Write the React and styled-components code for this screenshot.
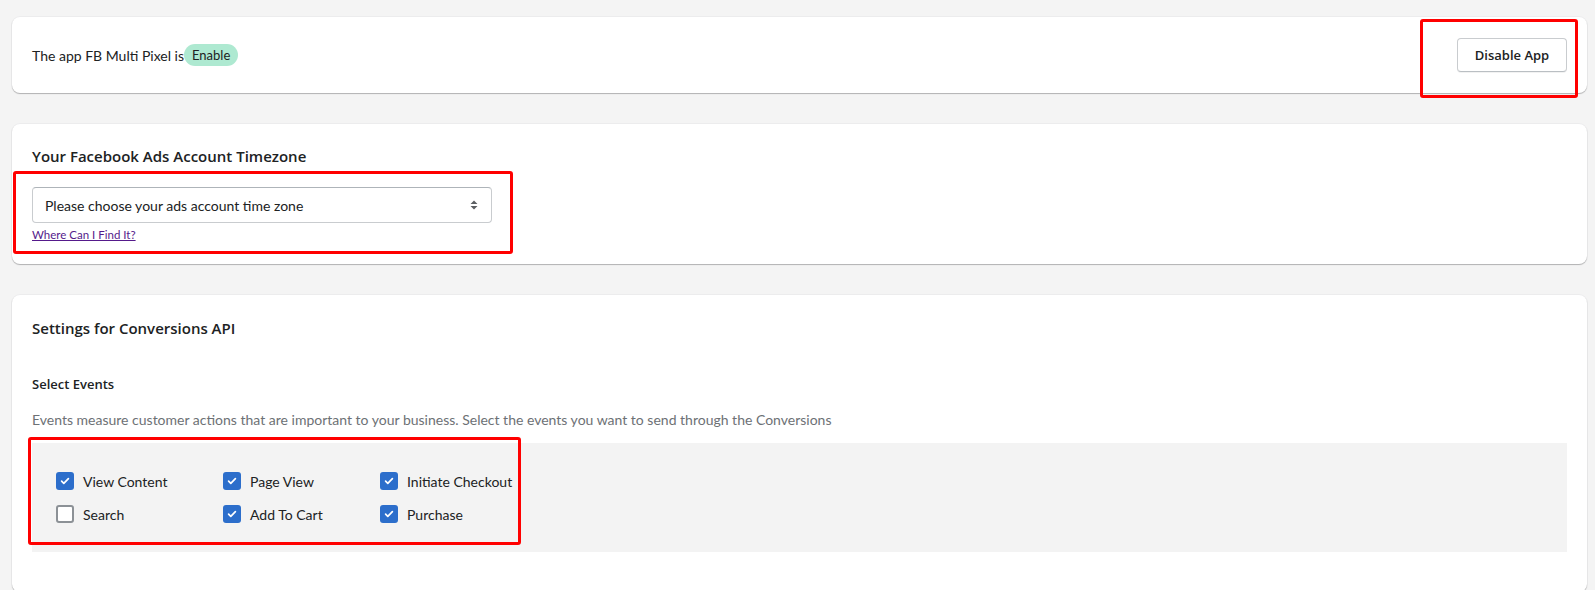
import React from "react";
import styled, { createGlobalStyle } from "styled-components";

const GlobalStyle = createGlobalStyle`
  body {
    margin: 0;
    background: #f4f4f4;
    font-family: "Lato", "Noto Sans", sans-serif;
    color: #202223;
  }
`;

const Page = styled.div`
  padding: 17px 8px 0 12px;
  display: flex;
  flex-direction: column;
  gap: 31px;
  height: 590px;
  overflow: hidden;
  box-sizing: border-box;
`;

const Card = styled.div`
  position: relative;
  background: #fff;
  border-radius: 8px;
  box-shadow: 0 1px 1px rgba(0, 0, 0, 0.25), 0 0 0 1px rgba(63, 63, 68, 0.04);
  padding: ${(p) => p.$pad || "22px 20px"};
  flex-shrink: 0;
`;

const StatusRow = styled.div`
  height: 76px;
  display: flex;
  align-items: center;
  justify-content: space-between;
  box-sizing: border-box;
`;

const StatusText = styled.div`
  display: flex;
  align-items: center;
  font-size: 14px;
`;

const Badge = styled.span`
  display: inline-flex;
  align-items: center;
  height: 22px;
  padding: 0 8px;
  border-radius: 11px;
  background: #aee9d1;
  font-size: 13px;
  color: #202223;
`;

const Button = styled.button`
  height: 34px;
  width: 110px;
  border: 1px solid #c9cccf;
  border-bottom-color: #babfc3;
  border-radius: 4px;
  background: #fff;
  font-family: "Open Sans", sans-serif;
  font-size: 13px;
  font-weight: 600;
  color: #202223;
  box-shadow: 0 1px 0 rgba(0, 0, 0, 0.05);
`;

const Marker = styled.div`
  position: absolute;
  border: 3px solid #ff0000;
  border-radius: 3px;
  pointer-events: none;
  box-sizing: border-box;
  top: ${(p) => p.$top}px;
  left: ${(p) => (p.$left != null ? `${p.$left}px` : "auto")};
  right: ${(p) => (p.$right != null ? `${p.$right}px` : "auto")};
  width: ${(p) => p.$w}px;
  height: ${(p) => p.$h}px;
`;

const Title = styled.h2`
  margin: 0;
  font-family: "Open Sans", sans-serif;
  font-size: 15px;
  line-height: 20px;
  font-weight: 600;
`;

const SubTitle = styled.h3`
  margin: ${(p) => p.$mt || 0}px 0 0;
  font-family: "Open Sans", sans-serif;
  font-size: 13px;
  line-height: 20px;
  font-weight: 600;
`;

const SelectBox = styled.div`
  margin-top: 21px;
  width: 460px;
  height: 36px;
  box-sizing: border-box;
  border: 1px solid #c9cccf;
  border-top-color: #aeb4b9;
  border-radius: 4px;
  display: flex;
  align-items: center;
  justify-content: space-between;
  padding: 0 12px 0 12px;
  font-size: 14px;
`;

const HelpLink = styled.a`
  display: inline-block;
  margin-top: 4px;
  font-size: 11.5px;
  line-height: 14px;
  color: #551a8b;
  text-decoration: underline;
`;

const Description = styled.p`
  margin: 16px 0 0;
  font-size: 14px;
  line-height: 20px;
  color: #6d7175;
`;

const EventsPanel = styled.div`
  margin-top: 13px;
  height: 109px;
  box-sizing: border-box;
  background: #f3f3f3;
  padding: 29px 0 0 24px;
  display: grid;
  grid-template-columns: 167px 157px auto;
  grid-auto-rows: 18px;
  row-gap: 15px;
`;

const CheckItem = styled.label`
  display: flex;
  align-items: center;
  gap: 9px;
  font-size: 14px;
  color: #202223;
  white-space: nowrap;
`;

const Box = styled.span`
  width: 18px;
  height: 18px;
  box-sizing: border-box;
  border-radius: 3px;
  display: inline-flex;
  align-items: center;
  justify-content: center;
  background: ${(p) => (p.$checked ? "#2c6ecb" : "#fff")};
  border: ${(p) => (p.$checked ? "none" : "2px solid #8c9196")};
`;

const Check = ({ checked, label }) => (
  <CheckItem>
    <Box $checked={checked}>
      {checked && (
        <svg width="12" height="12" viewBox="0 0 12 12">
          <path d="M2.6 6.2l2.2 2.2 4.6-4.8" fill="none" stroke="#fff" strokeWidth="1.7" strokeLinecap="round" strokeLinejoin="round" />
        </svg>
      )}
    </Box>
    {label}
  </CheckItem>
);

const events = [
  { label: "View Content", checked: true },
  { label: "Page View", checked: true },
  { label: "Initiate Checkout", checked: true },
  { label: "Search", checked: false },
  { label: "Add To Cart", checked: true },
  { label: "Purchase", checked: true },
];

export default function App() {
  return (
    <>
      <GlobalStyle />
      <Page>
        <Card $pad="0 20px">
          <StatusRow>
            <StatusText>
              The app FB Multi Pixel is
              <Badge>Enable</Badge>
            </StatusText>
            <Button>Disable App</Button>
          </StatusRow>
          <Marker $top={2} $right={9} $w={158} $h={79} />
        </Card>

        <Card>
          <Title>Your Facebook Ads Account Timezone</Title>
          <SelectBox>
            Please choose your ads account time zone
            <svg width="10" height="14" viewBox="0 0 10 14">
              <path d="M5 2.5L8.5 6H1.5z M5 11.5L1.5 8H8.5z" fill="#5c5f62" />
            </svg>
          </SelectBox>
          <HelpLink href="#">Where Can I Find It?</HelpLink>
          <Marker $top={47} $left={1} $w={500} $h={83} />
        </Card>

        <Card $pad="23px 20px 40px">
          <Title>Settings for Conversions API</Title>
          <SubTitle $mt={36}>Select Events</SubTitle>
          <Description>
            Events measure customer actions that are important to your business. Select the events you want to send through the Conversions
          </Description>
          <EventsPanel>
            {events.map((e) => (
              <Check key={e.label} label={e.label} checked={e.checked} />
            ))}
          </EventsPanel>
          <Marker $top={142} $left={16} $w={493} $h={108} />
        </Card>
      </Page>
    </>
  );
}
